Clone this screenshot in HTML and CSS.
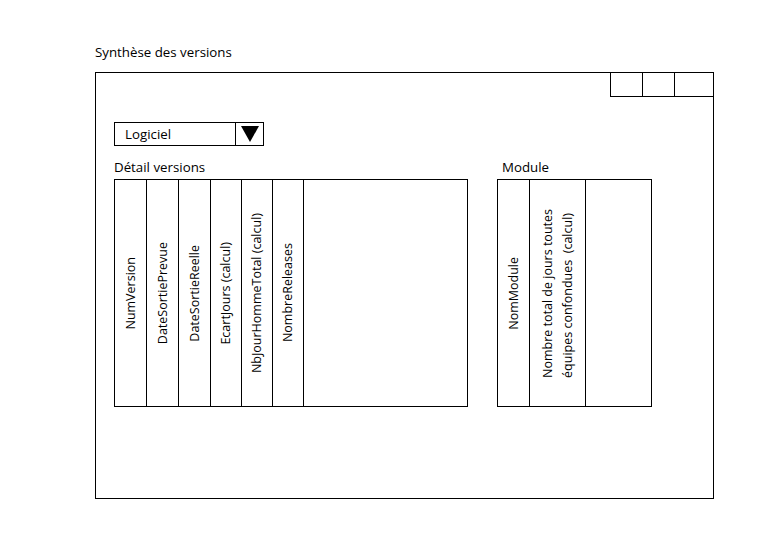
FILE: index.html
```html
<!DOCTYPE html>
<html lang="fr">
<head>
<meta charset="utf-8">
<title>Synthèse des versions</title>
<link rel="stylesheet" href="styles.css">
</head>
<body>
<div class="title">Synthèse des versions</div>
<div class="frame">
  <div class="winbar">
    <div class="winbtn w1"></div>
    <div class="winbtn w2"></div>
    <div class="winbtn w3"></div>
  </div>
  <div class="select">
    <div class="select-text">Logiciel</div>
    <div class="select-arrow"><svg width="18" height="16" viewBox="0 0 18 16"><polygon points="0,0 18,0 9,16" fill="#000"/></svg></div>
  </div>
  <div class="groups">
    <div class="group">
      <div class="label">Détail versions</div>
      <div class="table t1">
        <div class="col c32"><span class="vt">NumVersion</span></div>
        <div class="col c32"><span class="vt">DateSortiePrevue</span></div>
        <div class="col c32"><span class="vt">DateSortieReelle</span></div>
        <div class="col c31"><span class="vt">EcartJours (calcul)</span></div>
        <div class="col c31"><span class="vt">NbJourHommeTotal (calcul)</span></div>
        <div class="col c31"><span class="vt">NombreReleases</span></div>
        <div class="col last"></div>
      </div>
    </div>
    <div class="group g2">
      <div class="label lm">Module</div>
      <div class="table t2">
        <div class="col c32"><span class="vt">NomModule</span></div>
        <div class="col c56"><span class="vt multi">Nombre total de jours toutes<br>équipes confondues&nbsp; (calcul)</span></div>
        <div class="col last"></div>
      </div>
    </div>
  </div>
</div>
</body>
</html>
```

FILE: styles.css
```css
html, body {
  margin: 0;
  padding: 0;
  background: #fff;
}
body {
  font-family: "Open Sans", "Liberation Sans", sans-serif;
  font-size: 13.3px;
  color: #000;
  padding: 44px 0 0 95px;
}
.title {
  height: 17px;
  line-height: 17px;
  margin-bottom: 11px;
}
.frame {
  width: 617px;
  height: 425px;
  border: 1px solid #000;
  display: flex;
  flex-direction: column;
}
.winbar {
  display: flex;
  justify-content: flex-end;
}
.winbtn {
  height: 23px;
  border-left: 1px solid #000;
  border-bottom: 1px solid #000;
}
.w1 { width: 31px; }
.w2 { width: 31px; }
.w3 { width: 38px; }
.select {
  margin: 25px 0 0 18px;
  width: 148px;
  height: 22px;
  border: 1px solid #000;
  display: flex;
}
.select-text {
  flex: 1;
  padding-left: 10px;
  line-height: 22px;
}
.select-arrow {
  width: 27px;
  border-left: 1px solid #000;
  display: flex;
  align-items: center;
  justify-content: center;
}
.groups {
  display: flex;
  margin: 13px 0 0 18px;
  gap: 29px;
}
.label {
  height: 17px;
  line-height: 17px;
  margin-bottom: 3px;
}
.lm { padding-left: 5px; }
.table {
  display: flex;
  height: 226px;
  border: 1px solid #000;
}
.t1 { width: 352px; }
.t2 { width: 153px; }
.col {
  border-right: 1px solid #000;
  display: flex;
  align-items: center;
  justify-content: center;
}
.col.last { border-right: none; flex: 1; }
.c32 { width: 31px; }
.c31 { width: 30px; }
.c56 { width: 55px; }
.vt {
  writing-mode: vertical-rl;
  transform: rotate(180deg);
  white-space: nowrap;
  line-height: 18px;
  font-size: 12.5px;
}
.multi { line-height: 20px; }
```
